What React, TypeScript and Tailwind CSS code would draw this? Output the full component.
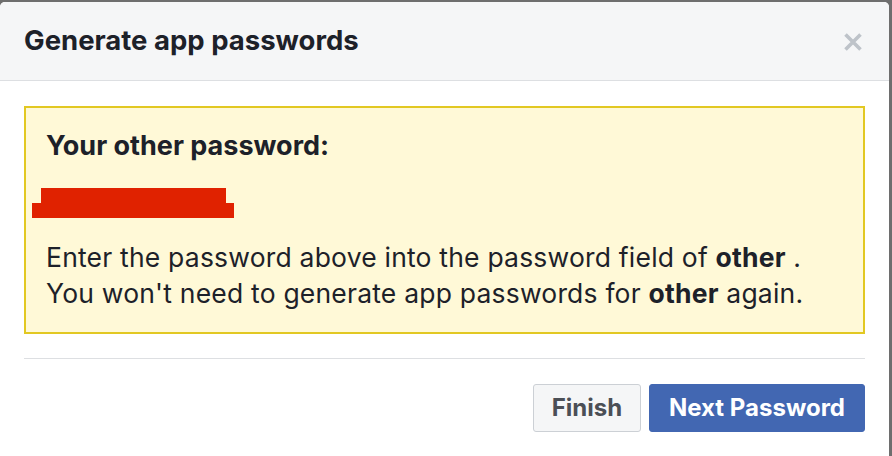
export default function App() {
  return (
    <div className="w-[892px] h-[456px] bg-[#6e6e6e] pt-[2px] pr-[3px] overflow-hidden" style={{ fontFamily: 'Inter, "Liberation Sans", Arial, sans-serif' }}>
      <div className="h-[460px] bg-white rounded-[5px] flex flex-col overflow-hidden">
        <div className="h-[79px] bg-[#f5f6f7] border-b border-[#dddfe2] flex items-center justify-between pl-[24px] pr-[27px] shrink-0">
          <div className="text-[27.5px] font-bold text-[#1d2129]">Generate app passwords</div>
          <svg width="18" height="18" viewBox="0 0 18 18" className="mt-[2px]">
            <path d="M1.5 1.5 L16.5 16.5 M16.5 1.5 L1.5 16.5" stroke="#bec3c9" strokeWidth="3.6" strokeLinecap="butt" />
          </svg>
        </div>
        <div className="px-[24px] pt-[25px]">
          <div className="bg-[#fff9d7] border-2 border-[#e2c822] pl-[20px] pr-[20px] pt-[20px] h-[228px]">
            <div className="text-[27px] font-bold text-[#1d2129] leading-[36px]">Your other password:</div>
            <div className="relative h-[30px] mt-[24px]">
              <div className="absolute left-[-5px] top-[0px] w-[185px] h-[15px] bg-[#e02200]" />
              <div className="absolute left-[-14px] top-[15px] w-[202px] h-[15px] bg-[#e02200]" />
            </div>
            <div className="mt-[21px] text-[26.5px] leading-[36px] tracking-[0.2px] text-[#1d2129]">
              <div>Enter the password above into the password field of <span className="font-bold">other</span> .</div>
              <div>You won't need to generate app passwords for <span className="font-bold">other</span> again.</div>
            </div>
          </div>
          <div className="mt-[24px] border-t border-[#dddfe2]" />
          <div className="flex justify-end gap-[8px] mt-[25px]">
            <button className="h-[48px] w-[108px] bg-[#f5f6f7] border border-[#ccd0d5] rounded-[3px] text-[24px] font-bold text-[#4b4f56]">Finish</button>
            <button className="h-[48px] w-[216px] bg-[#4267b2] border border-[#4267b2] rounded-[3px] text-[24px] font-bold text-white">Next Password</button>
          </div>
        </div>
      </div>
    </div>
  );
}
